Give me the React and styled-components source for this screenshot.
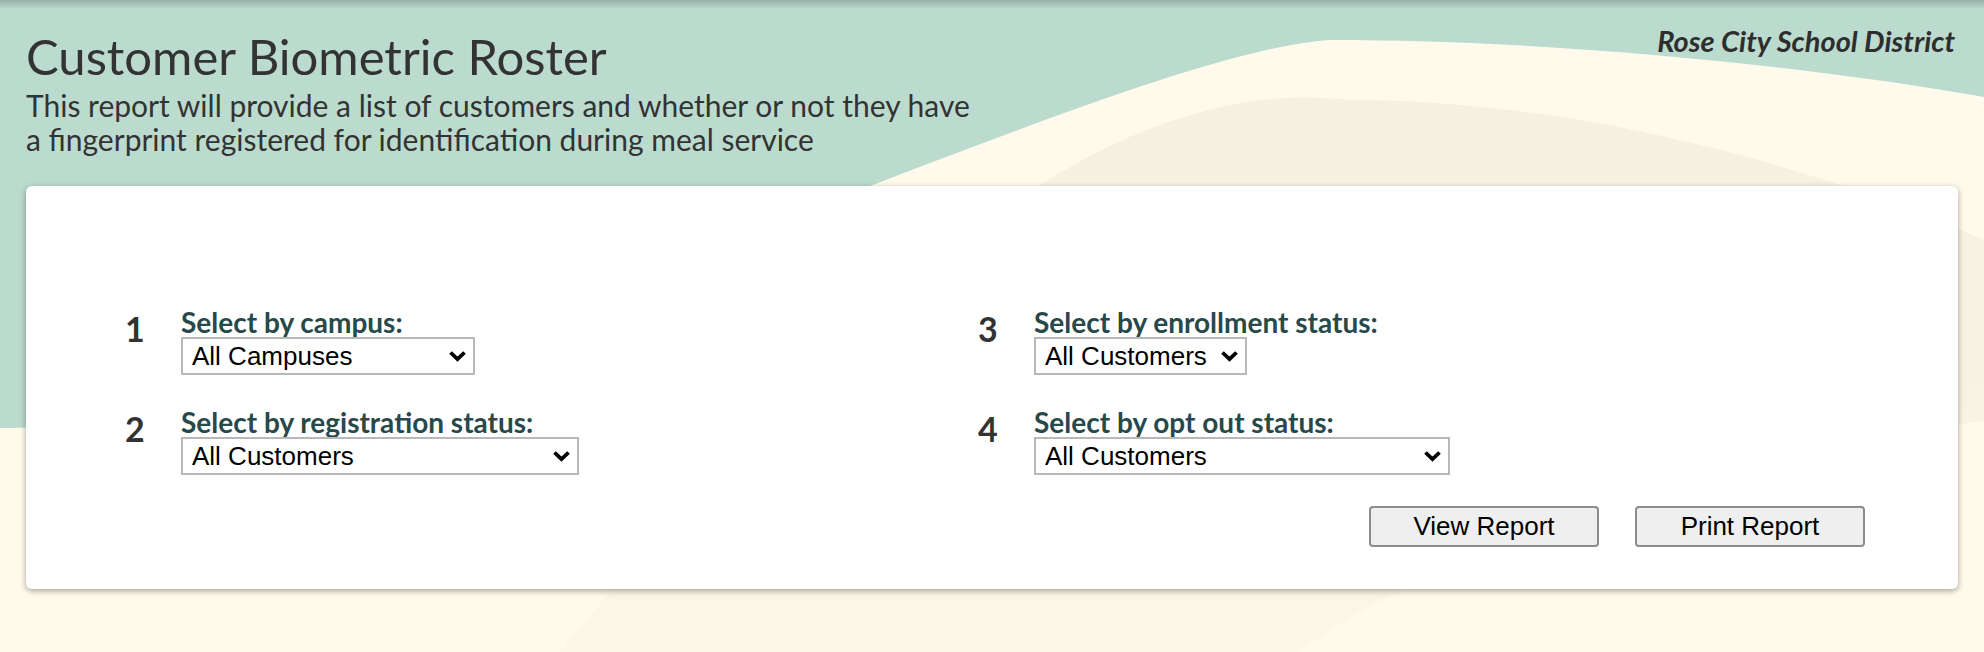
import styled, { createGlobalStyle } from "styled-components"

const GlobalStyle = createGlobalStyle`
  html, body {
    margin: 0;
    padding: 0;
  }
  body {
    font-family: Lato, "Open Sans", sans-serif;
  }
`

// Page + background drawing
const Page = styled.div`
  position: relative;
  width: 100%;
  height: 652px;
  overflow: hidden;
  background: #bcdbcf;
`
const Backdrop = styled.svg`
  position: absolute;
  top: 0;
  left: 0;
  width: 100%;
  height: 100%;
  z-index: 0;
`
const Content = styled.div`
  position: relative;
  z-index: 1;
  padding: 0 26px;
`

// Header
const Header = styled.header`
  display: flex;
  justify-content: space-between;
  align-items: flex-start;
`
const Title = styled.h1`
  margin: 31px 0 0;
  font-size: 49px;
  line-height: 50px;
  font-weight: 400;
  color: #333;
`
const Subtitle = styled.p`
  margin: 7px 0 0;
  font-size: 30px;
  line-height: 34px;
  color: #333;
`
const District = styled.div`
  margin-top: 26px;
  padding-right: 3px;
  font-size: 29px;
  line-height: 30px;
  font-weight: 700;
  font-style: italic;
  color: #2e2e2e;
`

// Card with the filters
const Card = styled.section`
  box-sizing: border-box;
  height: 403px;
  margin-top: 30px;
  padding: 124px 93px 0 99px;
  background: #fff;
  border-radius: 6px;
  box-shadow: 0 2px 6px rgba(0, 0, 0, 0.35);
`
const Grid = styled.div`
  display: grid;
  grid-template-columns: 853px 1fr;
  row-gap: 35px;
`
const Field = styled.div`
  display: flex;
  align-items: flex-start;
`
const Num = styled.div`
  flex: none;
  width: 56px;
  margin-top: 2px;
  font-size: 34px;
  line-height: 34px;
  font-weight: 700;
  color: #333;
`
const Stack = styled.div`
  display: flex;
  flex-direction: column;
`
const Label = styled.label`
  margin-bottom: 3px;
  font-size: 28px;
  line-height: 24px;
  font-weight: 700;
  color: #28494a;
`
const SelectWrap = styled.div`
  position: relative;
  width: ${props => props.width}px;
`
const Select = styled.select`
  appearance: none;
  box-sizing: border-box;
  width: 100%;
  height: 38px;
  margin: 0;
  padding: 0 30px 0 9px;
  border: 2px solid #b8b8b8;
  border-radius: 0;
  background: #fff;
  font-family: "Liberation Sans", Arial, sans-serif;
  font-size: 26px;
  color: #000;
`
const Chevron = styled.svg`
  position: absolute;
  right: 8px;
  top: 50%;
  transform: translateY(-50%);
  pointer-events: none;
`

// Buttons
const Actions = styled.div`
  display: flex;
  justify-content: flex-end;
  gap: 36px;
  margin-top: 31px;
`
const Button = styled.button`
  box-sizing: border-box;
  width: 230px;
  height: 41px;
  padding: 0;
  border: 2px solid #8c8c8c;
  border-radius: 4px;
  background: #efefef;
  font-family: "Liberation Sans", Arial, sans-serif;
  font-size: 26px;
  color: #000;
`

const filters = [
  { n: 1, label: "Select by campus:", value: "All Campuses", width: 294 },
  { n: 3, label: "Select by enrollment status:", value: "All Customers", width: 213 },
  { n: 2, label: "Select by registration status:", value: "All Customers", width: 398 },
  { n: 4, label: "Select by opt out status:", value: "All Customers", width: 416 },
]

const App = () => {
  return (
    <>
      <GlobalStyle />
      <Page>
        <Backdrop viewBox="0 0 1984 652" preserveAspectRatio="none">
          <defs>
            <linearGradient id="topShade" x1="0" y1="0" x2="0" y2="1">
              <stop offset="0" stopColor="#000" stopOpacity="0.2" />
              <stop offset="1" stopColor="#000" stopOpacity="0" />
            </linearGradient>
            <linearGradient id="band" x1="0" y1="0" x2="0" y2="1">
              <stop offset="0" stopColor="#f5f1e2" />
              <stop offset="0.6" stopColor="#f8f4e5" />
              <stop offset="1" stopColor="#fcf8e9" />
            </linearGradient>
          </defs>
          <path d="M0 428 C400 428, 1100 55, 1330 40 C1550 40, 1800 65, 1984 97 L1984 652 L0 652 Z" fill="#fffaeb" />
          <path d="M560 652 C850 300, 1100 70, 1350 100 C1600 100, 1850 180, 1984 240 L1984 420 C1700 470, 1450 540, 1300 652 Z" fill="url(#band)" />
          <rect x="0" y="0" width="1984" height="9" fill="url(#topShade)" />
        </Backdrop>
        <Content>
          <Header>
            <div>
              <Title>Customer Biometric Roster</Title>
              <Subtitle>
                This report will provide a list of customers and whether or not they have
                <br />
                a fingerprint registered for identification during meal service
              </Subtitle>
            </div>
            <District>Rose City School District</District>
          </Header>
          <Card>
            <Grid>
              {filters.map((f) => (
                <Field key={f.n}>
                  <Num>{f.n}</Num>
                  <Stack>
                    <Label>{f.label}</Label>
                    <SelectWrap width={f.width}>
                      <Select defaultValue={f.value}>
                        <option>{f.value}</option>
                      </Select>
                      <Chevron width="19" height="12" viewBox="0 0 19 12">
                        <polyline points="2.5,2.5 9.5,9.2 16.5,2.5" fill="none" stroke="#000" strokeWidth="3.8" />
                      </Chevron>
                    </SelectWrap>
                  </Stack>
                </Field>
              ))}
            </Grid>
            <Actions>
              <Button>View Report</Button>
              <Button>Print Report</Button>
            </Actions>
          </Card>
        </Content>
      </Page>
    </>
  )
}

export default App
